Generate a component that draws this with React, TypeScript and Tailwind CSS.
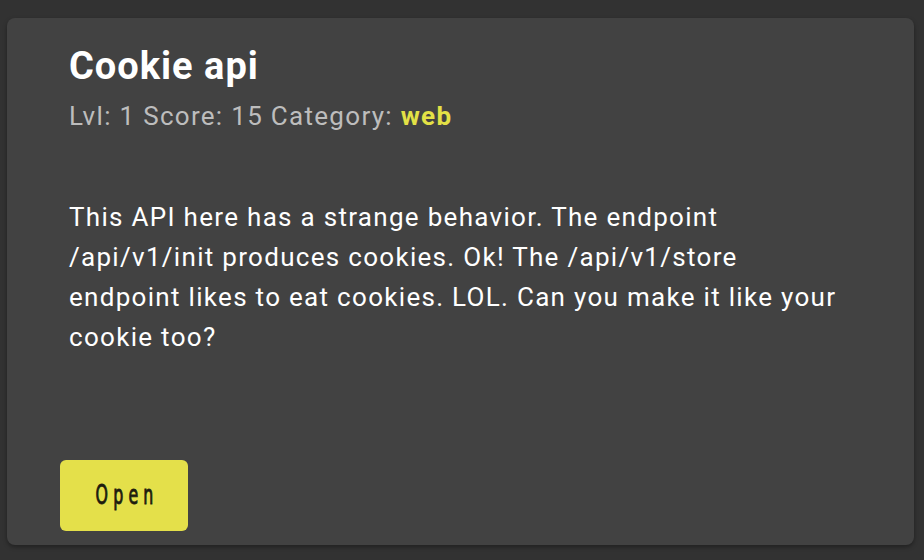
export default function App() {
  return (
    <div className="min-h-[560px] bg-[#323232] pt-[18px] pl-[7px] pr-[10px] font-['Roboto',sans-serif]">
      <div className="flex h-[527px] flex-col rounded-lg bg-[#424242] pl-[53px] pr-[66px] shadow-[0_2px_4px_rgba(0,0,0,0.35)]">
        <div className="pl-[9px] pt-[26px]">
          <h1 className="text-[38px] font-bold leading-[44px] tracking-[1px] text-white">Cookie api</h1>
          <p className="mt-[12px] text-[26px] leading-[32px] tracking-[1.3px] text-[#bdbdbd]">
            Lvl: 1 Score: 15 Category: <span className="font-bold text-[#e3e146]">web</span>
          </p>
          <p className="mt-[65px] text-[26px] leading-[40px] tracking-[1.3px] text-white">
            This API here has a strange behavior. The endpoint /api/v1/init produces cookies. Ok! The
            /api/v1/store endpoint likes to eat cookies. LOL. Can you make it like your cookie too?
          </p>
        </div>
        <div className="mt-auto mb-[14px]">
          <button
            type="button"
            className="flex h-[71px] w-[128px] items-center justify-center rounded-md bg-[#e4e04a] text-[#1c1c0e]"
          >
            <span className="inline-block scale-x-[0.65] pl-[8px] font-['DejaVu_Sans_Condensed','DejaVu_Sans',sans-serif] text-[27px] tracking-[8px] [-webkit-text-stroke:0.9px_#1c1c0e]">
              Open
            </span>
          </button>
        </div>
      </div>
    </div>
  );
}
